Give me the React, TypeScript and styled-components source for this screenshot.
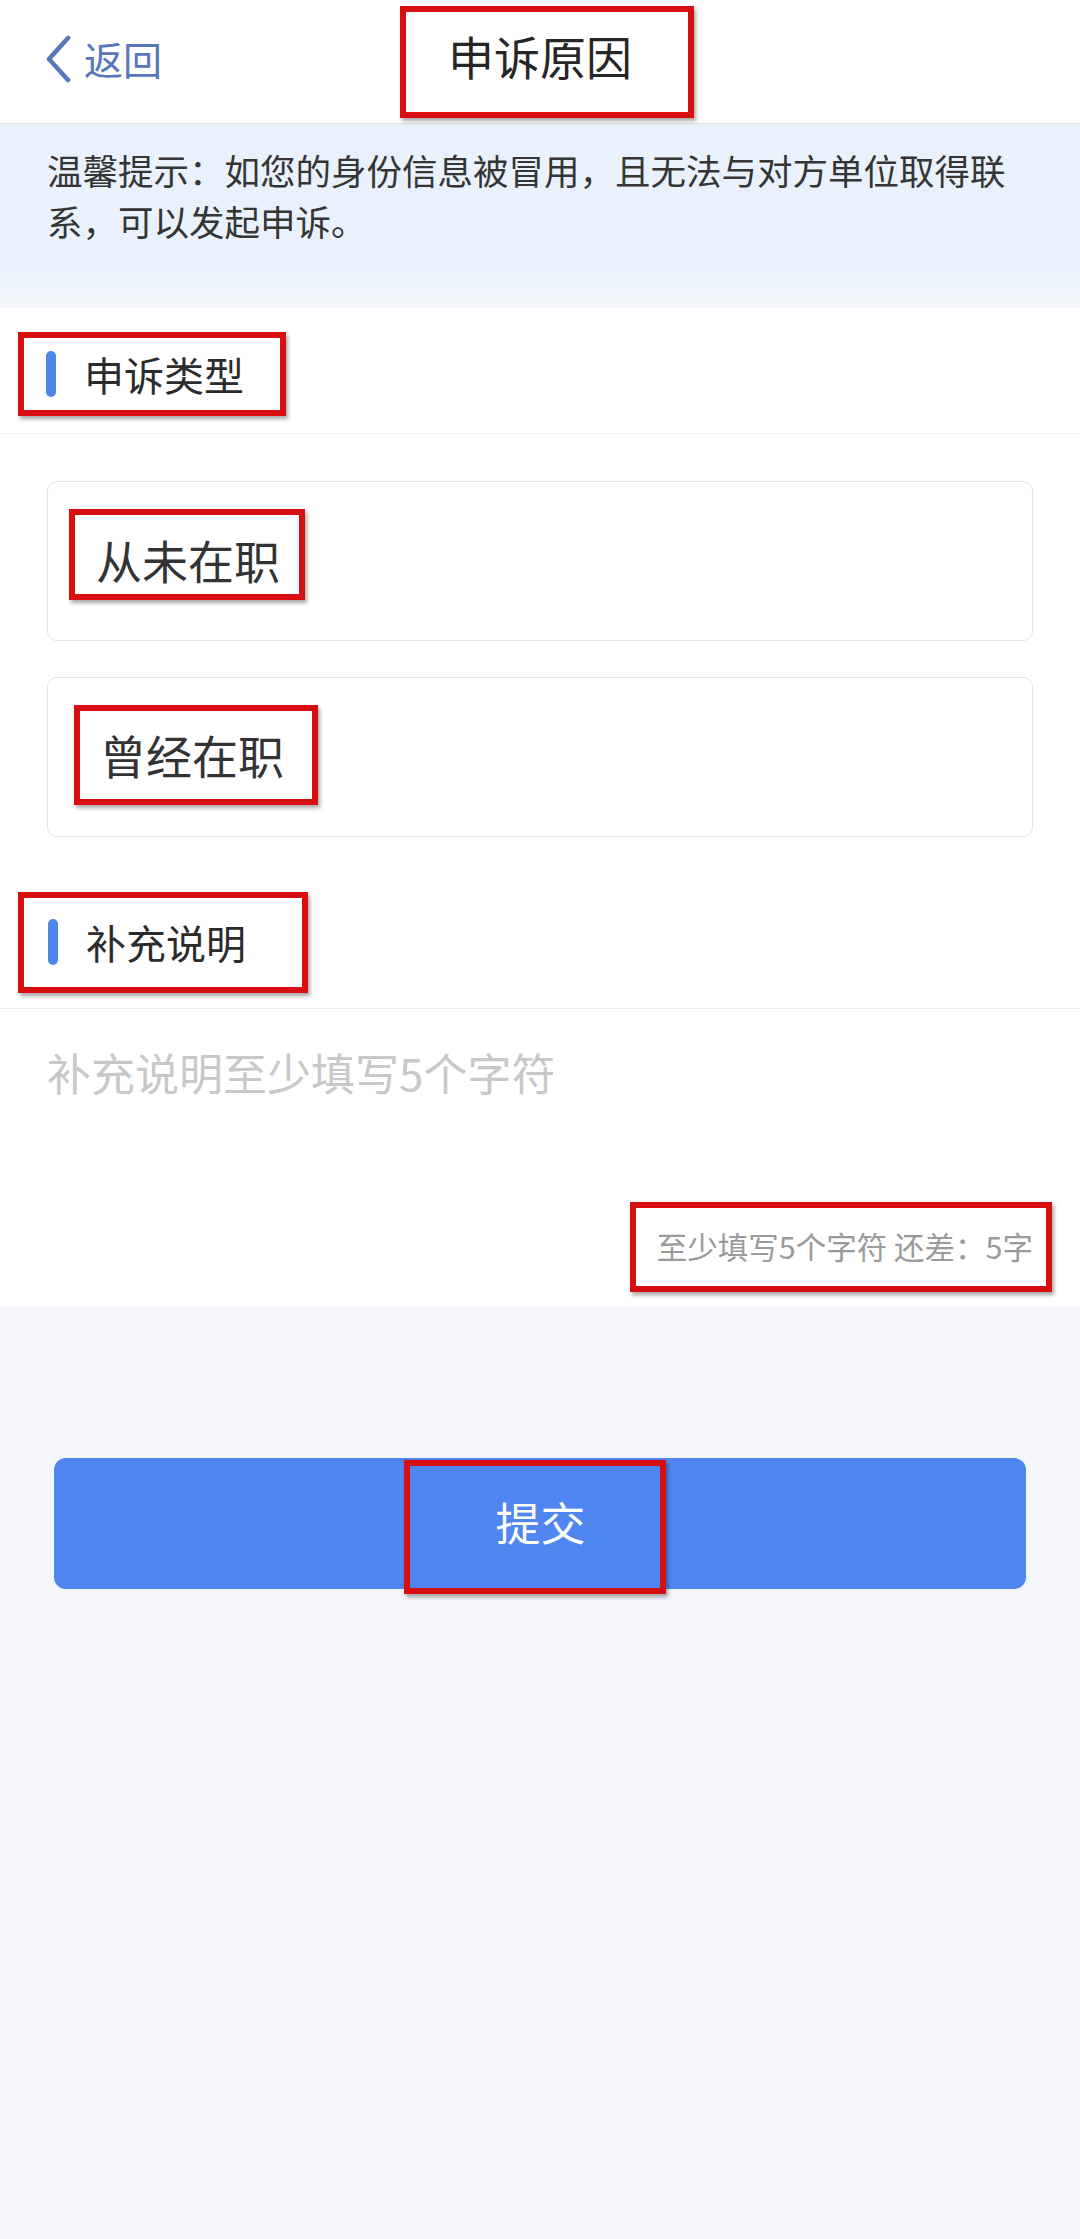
import React from 'react';
import styled, { createGlobalStyle } from 'styled-components';

const GlobalStyle = createGlobalStyle`
  html, body {
    margin: 0;
    padding: 0;
    background: #f5f6fa;
  }
  body {
    font-family: "Noto Sans CJK SC", "Noto Sans", sans-serif;
    color: #333;
  }
  * {
    box-sizing: border-box;
  }
`;

// Red annotation frame drawn around parts of the screenshot
interface MarkProps {
  $pad: string;
  $shift?: string;
}

const Mark = styled.span<MarkProps>`
  display: inline-flex;
  align-items: center;
  border: 6px solid #d80f10;
  box-shadow: 2px 3px 4px rgba(0, 0, 0, 0.35);
  padding: ${({ $pad }) => $pad};
  margin: ${({ $shift }) => $shift || '0'};
  flex-shrink: 0;
`;

const Page = styled.div`
  min-height: 2239px;
  background: #f5f6fa;
`;

const Header = styled.header`
  height: 124px;
  background: #fff;
  border-bottom: 1px solid #e2e3e6;
  display: grid;
  grid-template-columns: 1fr auto 1fr;
  align-items: center;
`;

const Back = styled.div`
  display: flex;
  align-items: center;
  gap: 12px;
  padding-left: 44px;
  padding-bottom: 6px;
  color: #5677b9;
  font-size: 39px;
  line-height: 39px;
`;

const Title = styled.h1`
  margin: 0;
  font-size: 46px;
  line-height: 46px;
  font-weight: 400;
  color: #262626;
`;

const Tip = styled.div`
  background: linear-gradient(180deg, #e9f2fc 0%, #e9f2fc 78%, #f3f6fa 100%);
  padding: 20px 47px 62px;
  font-size: 35.5px;
  line-height: 51px;
  color: #353535;
`;

const Panel = styled.section`
  background: #fff;
`;

const SectionHead = styled.div`
  height: 126px;
  display: flex;
  align-items: center;
  padding-left: 18px;
  border-bottom: 1px solid #ececee;
`;

const Bar = styled.span`
  width: 10px;
  height: 46px;
  border-radius: 5px;
  background: #4f86ea;
`;

const SectionTitle = styled.span`
  font-size: 40px;
  line-height: 40px;
  color: #2b2b2b;
  margin-left: 28px;
`;

const Options = styled.div`
  display: flex;
  flex-direction: column;
  gap: 36px;
  padding: 47px 47px 46px;
`;

interface OptionProps {
  $inset: number;
}

const Option = styled.div<OptionProps>`
  height: 160px;
  border: 1px solid #e3e4e7;
  border-radius: 10px;
  display: flex;
  align-items: center;
  padding-left: ${({ $inset }) => $inset}px;
`;

const OptionText = styled.span`
  font-size: 46px;
  line-height: 46px;
  color: #333;
`;

const Note = styled.textarea`
  display: block;
  width: 100%;
  height: 193px;
  border: none;
  outline: none;
  resize: none;
  padding: 41px 47px 0;
  font-family: "Noto Sans CJK SC", "Noto Sans", sans-serif;
  font-size: 44px;
  line-height: 44px;
  color: #333;
  background: transparent;

  &::placeholder {
    color: #c8c8cb;
  }
`;

const Counter = styled.div`
  display: flex;
  justify-content: flex-end;
  padding: 0 28px 14px 0;
`;

const CounterText = styled.span`
  font-size: 30.5px;
  line-height: 31px;
  color: #9a9a9a;
  white-space: pre;
`;

const Footer = styled.div`
  padding: 152px 54px 0;
`;

const Submit = styled.button`
  width: 100%;
  height: 131px;
  border: none;
  border-radius: 12px;
  background: #4f86f0;
  display: flex;
  justify-content: center;
  align-items: flex-start;
  padding: 2px 0 0;
  cursor: pointer;
`;

const SubmitText = styled.span`
  font-family: "Noto Sans CJK SC", "Noto Sans", sans-serif;
  font-size: 45px;
  line-height: 45px;
  color: #fff;
`;

const Chevron = () => (
  <svg width="28" height="48" viewBox="0 0 28 48" fill="none">
    <path d="M24 3 L5 24 L24 45" stroke="#5677b9" strokeWidth="4.5" strokeLinecap="round" strokeLinejoin="round" />
  </svg>
);

const App: React.FC = () => {
  const [note, setNote] = React.useState('');
  const left = Math.max(0, 5 - note.length);

  return (
    <Page>
      <GlobalStyle />
      <Header>
        <Back>
          <Chevron />
          <span>返回</span>
        </Back>
        <Mark $pad="20px 56px 34px 42px" $shift="0 0 0 14px">
          <Title>申诉原因</Title>
        </Mark>
        <div />
      </Header>

      <Tip>温馨提示：如您的身份信息被冒用，且无法与对方单位取得联系，可以发起申诉。</Tip>

      <Panel>
        <SectionHead>
          <Mark $pad="13px 36px 13px 22px" $shift="6px 0 0 0">
            <Bar />
            <SectionTitle>申诉类型</SectionTitle>
          </Mark>
        </SectionHead>

        <Options>
          <Option $inset={21}>
            <Mark $pad="21px 19px 12px 21px" $shift="0 0 14px 0">
              <OptionText>从未在职</OptionText>
            </Mark>
          </Option>
          <Option $inset={26}>
            <Mark $pad="20px 28px 22px 20px" $shift="0 0 4px 0">
              <OptionText>曾经在职</OptionText>
            </Mark>
          </Option>
        </Options>

        <SectionHead>
          <Mark $pad="21px 56px 22px 24px" $shift="0 0 6px 0">
            <Bar />
            <SectionTitle>补充说明</SectionTitle>
          </Mark>
        </SectionHead>

        <Note
          value={note}
          onChange={(e) => setNote(e.target.value)}
          placeholder="补充说明至少填写5个字符"
        />
        <Counter>
          <Mark $pad="23px 13px 24px 21px">
            <CounterText>{`至少填写5个字符 还差：${left}字`}</CounterText>
          </Mark>
        </Counter>
      </Panel>

      <Footer>
        <Submit>
          <Mark $pad="33px 74px 44px 85px" $shift="0 0 0 -10px">
            <SubmitText>提交</SubmitText>
          </Mark>
        </Submit>
      </Footer>
    </Page>
  );
};

export default App;
